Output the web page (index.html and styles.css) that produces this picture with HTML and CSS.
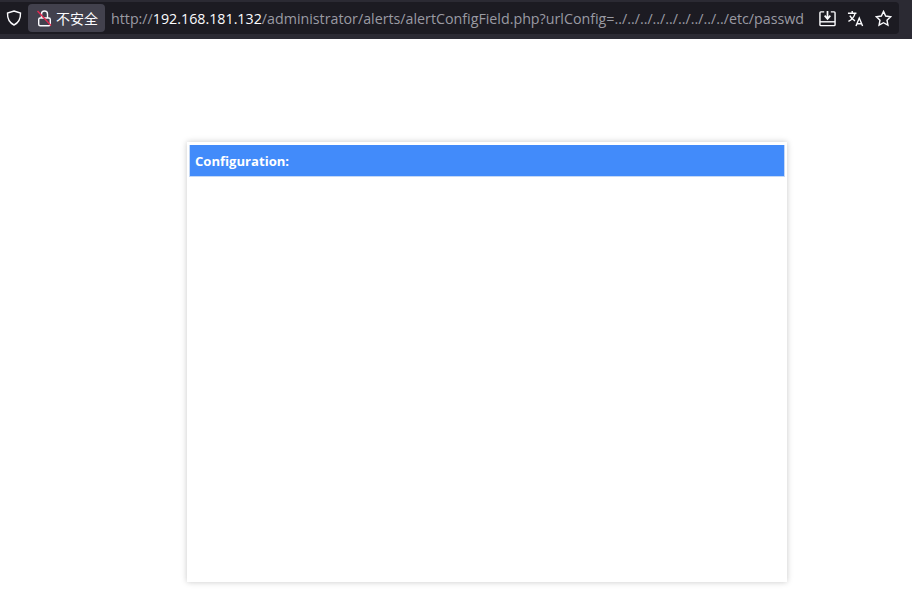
FILE: index.html
```html
<!DOCTYPE html>
<html lang="en">
<head>
  <meta charset="UTF-8"/>
  <title>alertConfigField</title>
  <link rel="stylesheet" href="styles.css">
</head>
<body>
  <header class="toolbar">
    <div class="url-bar">
      <svg class="shield" viewBox="0 0 16 16">
        <path d="M8 1 L14.500 3 C14.700 9 12.500 12.800 8 15 C3.500 12.800 1.300 9 1.500 3 Z"/>
      </svg>
      <div class="security">
        <svg class="lock" viewBox="0 0 15 18">
          <rect x="1.700" y="9" width="11.600" height="7.800" rx="1.500"/>
          <path d="M4.500 9 V5 C4.500 1 10.500 1 10.500 5 V9"/>
          <path class="slash" d="M0.500 2 L14 16.500"/>
        </svg>
        <span class="security-text">不安全</span>
      </div>
      <div class="url"><span class="dim">http://</span>192.168.181.132<span class="dim">/administrator/alerts/alertConfigField.php?urlConfig=../../../../../../../../../etc/passwd</span></div>
      <div class="actions">
        <svg viewBox="0 0 18 18">
          <path d="M5.500 2 H2 C1.500 2 1 2.500 1 3 V15.500 C1 16 1.500 16.500 2 16.500 H16 C16.500 16.500 17 16 17 15.500 V3 C17 2.500 16.500 2 16 2 H12.500"/>
          <path d="M1 12.500 H17"/>
          <path class="heavy" d="M9 1 V9 M6 6 L9 9.500 L12 6"/>
        </svg>
        <svg viewBox="0 0 18 18">
          <path d="M1 3.500 H10 M5.500 1 V3.500 M8.500 3.500 C7.500 7.500 4.500 10.500 1.500 12 M3 6 C4.500 9 6.500 10.500 8.500 11.500"/>
          <path d="M9.500 17 L13 8.500 L16.500 17 M10.700 14.500 H15.300"/>
        </svg>
        <svg viewBox="0 0 18 18">
          <path d="M9 1.500 L11.300 6.400 L16.600 7.100 L12.700 10.800 L13.700 16.100 L9 13.500 L4.300 16.100 L5.300 10.800 L1.400 7.100 L6.700 6.400 Z"/>
        </svg>
      </div>
    </div>
  </header>

  <main class="page">
    <div class="panel">
      <div class="panel-head">Configuration:</div>
    </div>
  </main>
</body>
</html>
```

FILE: styles.css
```css
* {
  margin: 0;
  padding: 0;
  box-sizing: border-box;
}

body {
  background-color: #fff;
  font-family: 'Open Sans', sans-serif;
}

.toolbar {
  height: 39px;
  background-color: #2b2a33;
  padding: 2px 13px 5px 0;
}

.url-bar {
  height: 32px;
  background-color: #1c1b22;
  border-radius: 0 4px 4px 0;
  display: flex;
  align-items: center;
  padding-left: 6px;
}

.shield {
  width: 16px;
  height: 16px;
  fill: none;
  stroke: #fbfbfe;
  stroke-width: 1.400;
}

.security {
  display: flex;
  align-items: center;
  gap: 4px;
  height: 28px;
  margin-left: 6px;
  padding: 0 7px 0 9px;
  background-color: #42414d;
  border-radius: 4px;
}

.lock {
  width: 15px;
  height: 18px;
  fill: none;
  stroke: #fbfbfe;
  stroke-width: 1.400;
}

.lock .slash {
  stroke: #e22850;
}

.security-text {
  font-family: 'Noto Sans CJK SC', sans-serif;
  font-size: 14px;
  color: #fbfbfe;
}

.url {
  margin-left: 6px;
  font-family: 'Open Sans', sans-serif;
  font-size: 14.250px;
  color: #fbfbfe;
  white-space: nowrap;
  flex: 1;
  overflow: hidden;
}

.dim {
  color: #9a9aa2;
}

.actions {
  display: flex;
  align-items: center;
  gap: 11px;
  padding-right: 7px;
}

.actions svg {
  width: 17px;
  height: 17px;
  fill: none;
  stroke: #fbfbfe;
  stroke-width: 1.500;
}

.actions .heavy {
  stroke-width: 1.800;
}

.page {
  height: 557px;
  padding: 103px 0 0 187px;
}

.panel {
  width: 600px;
  height: 440px;
  padding: 3px 2px;
  background-color: #fff;
  box-shadow: 0 0 6px rgba(0, 0, 0, 0.22);
}

.panel-head {
  height: 32px;
  line-height: 32px;
  padding-left: 5px;
  background-color: #428bfa;
  border: 1px solid #c4d8f5;
  border-top: 0;
  color: #fff;
  font-family: 'Open Sans', sans-serif;
  font-size: 13.100px;
  font-weight: 700;
}
```
